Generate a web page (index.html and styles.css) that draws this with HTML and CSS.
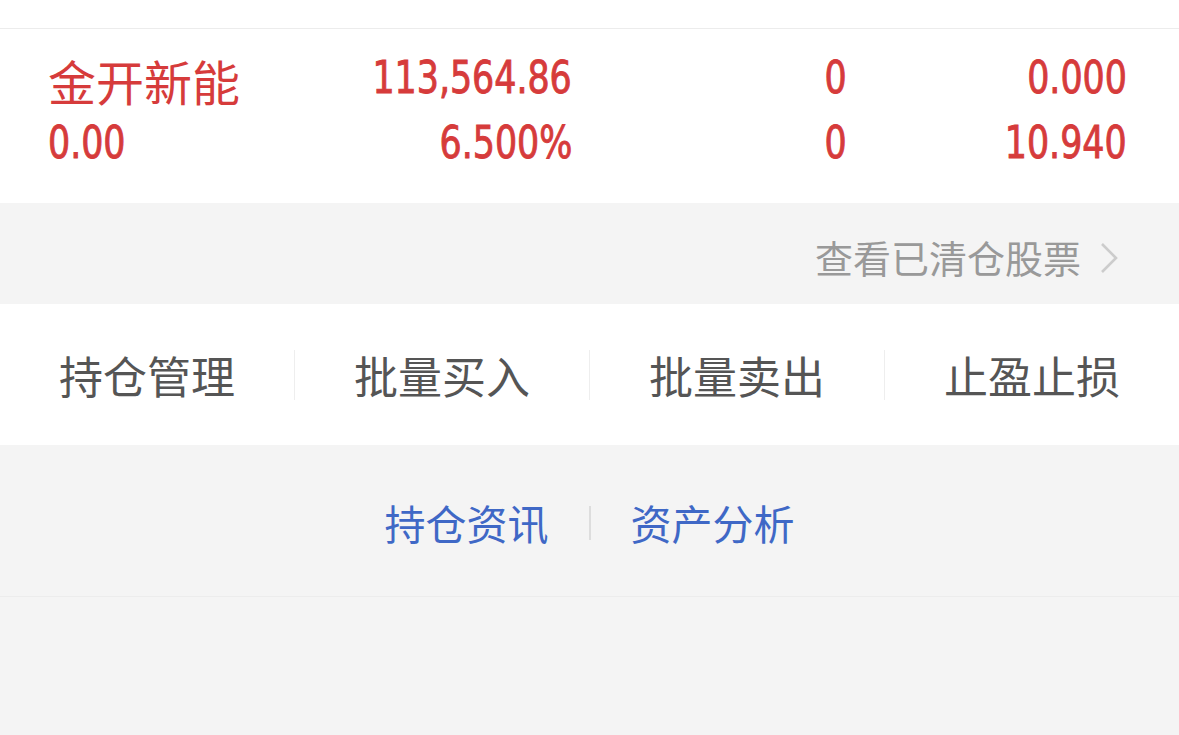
FILE: index.html
```html
<!DOCTYPE html>
<html lang="zh">
<head>
<meta charset="utf-8">
<link rel="stylesheet" href="styles.css">
</head>
<body>
<div class="page">
  <div class="top"></div>
  <div class="stock">
    <div class="name">金开新能</div>
    <div class="cell"><span class="num">113,564.86</span></div>
    <div class="cell"><span class="num">0</span></div>
    <div class="cell"><span class="num">0.000</span></div>
    <div class="cell left"><span class="num">0.00</span></div>
    <div class="cell"><span class="num">6.500%</span></div>
    <div class="cell"><span class="num">0</span></div>
    <div class="cell"><span class="num">10.940</span></div>
  </div>
  <div class="cleared">
    <span class="cleared-text">查看已清仓股票</span>
    <svg class="chev" width="20" height="32" viewBox="0 0 20 32"><path d="M3 2 L17 16 L3 30" fill="none" stroke="#cccccc" stroke-width="2.6"/></svg>
  </div>
  <div class="actions">
    <div class="act">持仓管理</div>
    <div class="act">批量买入</div>
    <div class="act">批量卖出</div>
    <div class="act">止盈止损</div>
  </div>
  <div class="links">
    <span class="link">持仓资讯</span>
    <span class="sep"></span>
    <span class="link">资产分析</span>
  </div>
  <div class="rest"></div>
</div>
</body>
</html>
```
FILE: styles.css
```css
html, body {
  margin: 0;
  padding: 0;
  background: #f4f4f4;
}
.page {
  width: 1179px;
  height: 735px;
  overflow: hidden;
  font-family: "Noto Sans CJK SC", "Noto Sans", sans-serif;
}
.top {
  height: 28px;
  background: #fff;
  border-bottom: 1px solid #ececec;
}
.stock {
  background: #fff;
  height: 174px;
  box-sizing: border-box;
  padding: 16px 52px 0 48px;
  display: grid;
  grid-template-columns: 270px 254px 275px 280px;
  grid-template-rows: 65px 65px;
  align-items: center;
  color: #d63b3b;
}
.name {
  font-size: 48px;
  line-height: 1;
  margin-top: 4px;
}
.cell {
  text-align: right;
  line-height: 1;
}
.num {
  display: inline-block;
  font-family: "DejaVu Sans Condensed", "DejaVu Sans", sans-serif;
  font-size: 45px;
  line-height: 1;
  -webkit-text-stroke: 0.9px #d63b3b;
  transform: scaleX(0.86);
  transform-origin: right center;
}
.cell.left {
  text-align: left;
}
.cell.left .num {
  transform-origin: left center;
}
.cleared {
  height: 101px;
  box-sizing: border-box;
  padding: 6px 60px 0 0;
  background: #f4f4f4;
  display: flex;
  align-items: center;
  justify-content: flex-end;
  gap: 18px;
}
.cleared-text {
  font-size: 38px;
  color: #999;
  line-height: 1;
}
.chev {
  display: block;
  margin-top: 2px;
}
.actions {
  height: 141px;
  background: #fff;
  display: flex;
  align-items: center;
}
.act {
  flex: 1;
  text-align: center;
  font-size: 44px;
  line-height: 50px;
  color: #555;
  border-left: 1px solid #eeeeee;
}
.act:first-child {
  border-left: none;
}
.links {
  height: 152px;
  background: #f4f4f4;
  border-bottom: 1px solid #ececec;
  display: flex;
  align-items: center;
  justify-content: center;
  gap: 40px;
  box-sizing: border-box;
  padding-top: 4px;
}
.link {
  font-size: 41px;
  line-height: 1;
  color: #3f68c6;
}
.sep {
  width: 2px;
  height: 34px;
  background: #dddddd;
}
.rest {
  height: 200px;
  background: #f4f4f4;
}
```
